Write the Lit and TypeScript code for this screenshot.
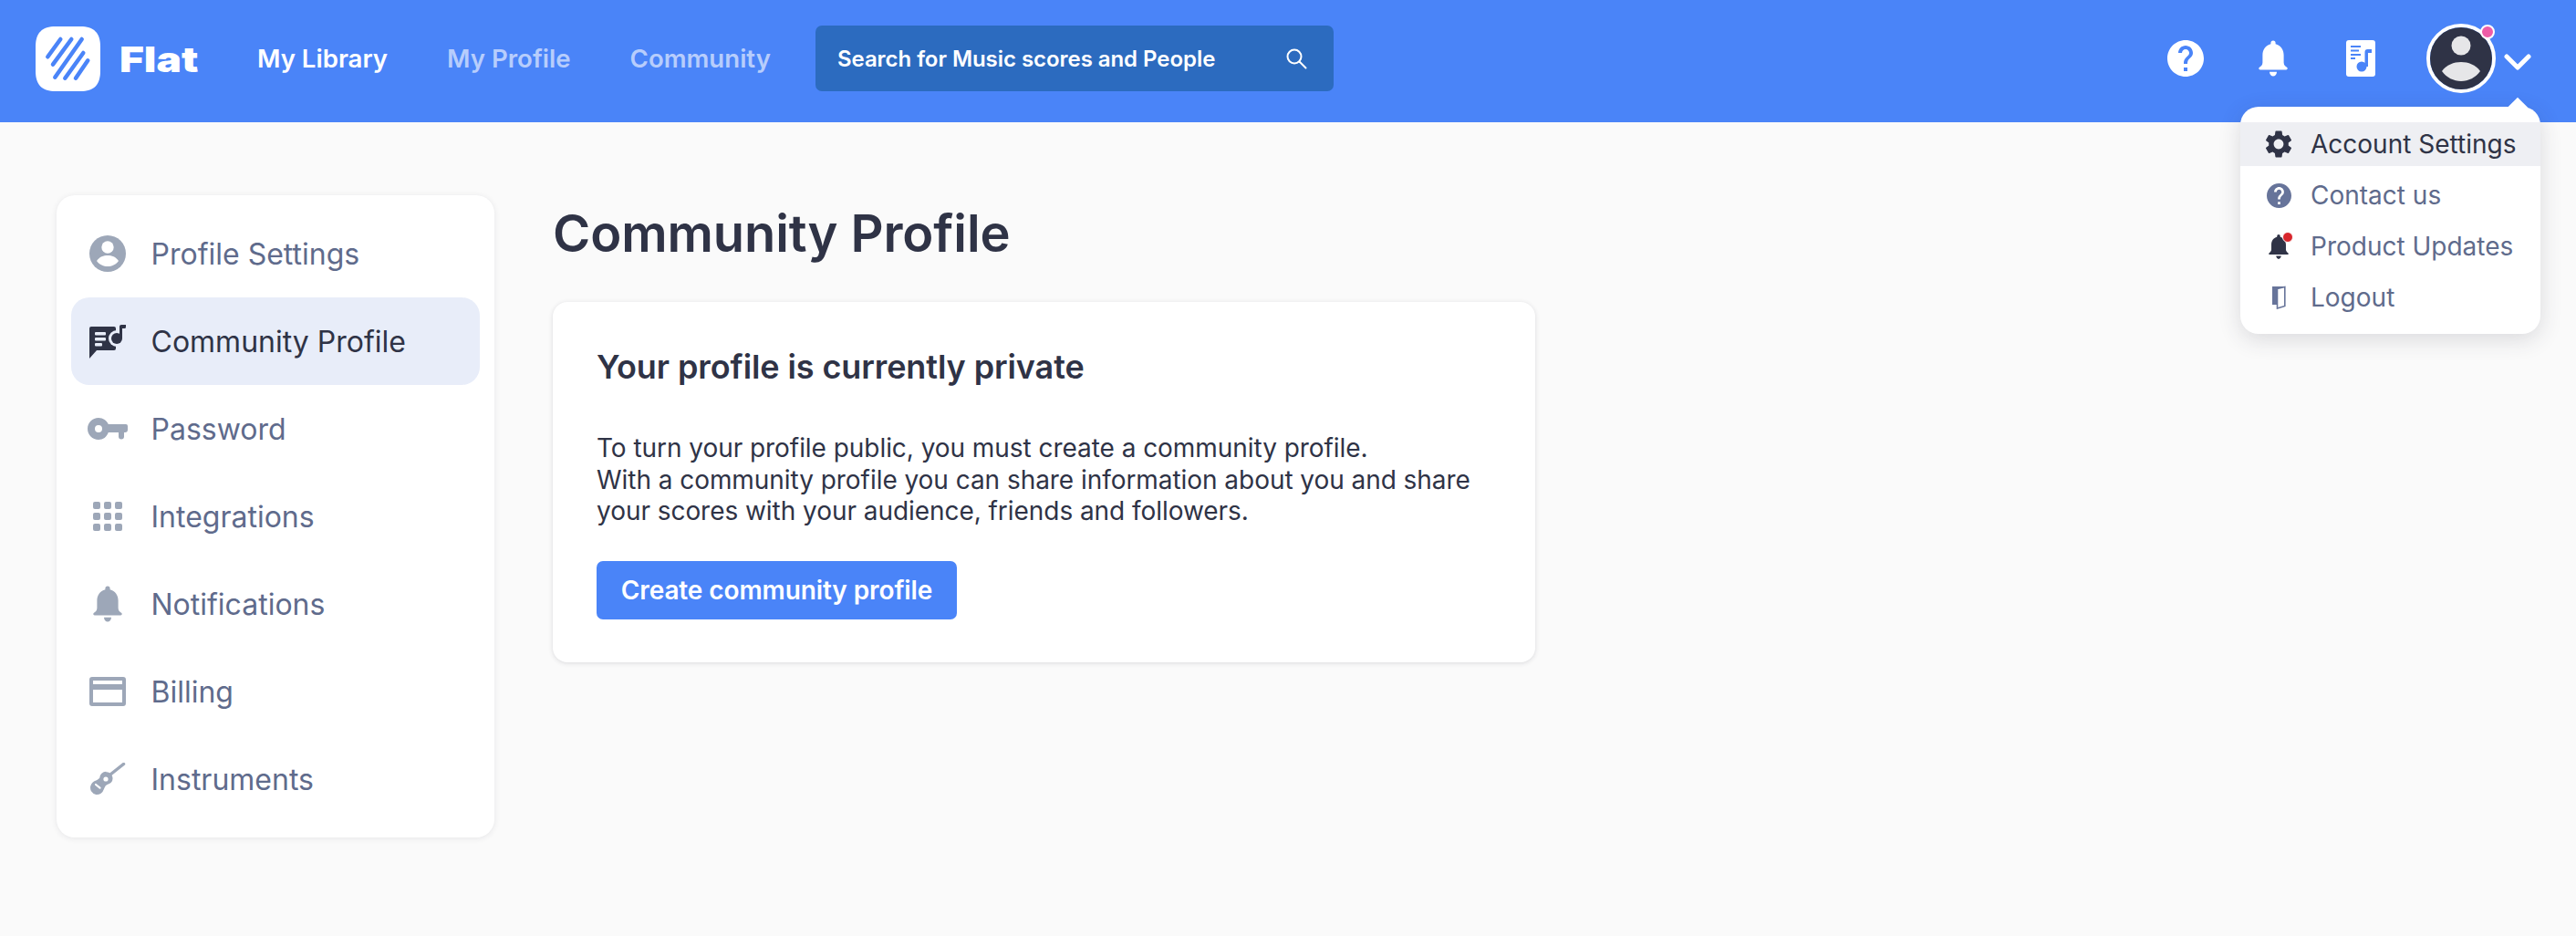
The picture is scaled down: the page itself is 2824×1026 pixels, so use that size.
import { css, html, LitElement, svg } from "lit";
import { customElement } from "lit/decorators.js";

const HELP = "M12 2C6.48 2 2 6.48 2 12s4.48 10 10 10 10-4.48 10-10S17.52 2 12 2zm1 17h-2v-2h2v2zm2.07-7.75l-.9.92C13.45 12.9 13 13.5 13 15h-2v-.5c0-1.1.45-2.1 1.17-2.83l1.24-1.26c.37-.36.59-.86.59-1.41 0-1.1-.9-2-2-2s-2 .9-2 2H8c0-2.21 1.79-4 4-4s4 1.79 4 4c0 .88-.36 1.68-.93 2.25z";
const GEAR = "M19.14 12.94c.04-.3.06-.61.06-.94 0-.32-.02-.64-.07-.94l2.03-1.58a.49.49 0 0 0 .12-.61l-1.92-3.32a.49.49 0 0 0-.59-.22l-2.39.96c-.5-.38-1.03-.7-1.62-.94l-.36-2.54a.48.48 0 0 0-.48-.41h-3.84c-.24 0-.43.17-.47.41l-.36 2.54c-.59.24-1.13.57-1.62.94l-2.39-.96c-.22-.08-.47 0-.59.22L2.74 8.87c-.12.21-.08.47.12.61l2.03 1.58c-.05.3-.09.63-.09.94s.02.64.07.94l-2.03 1.58a.49.49 0 0 0-.12.61l1.92 3.32c.12.22.37.29.59.22l2.39-.96c.5.38 1.03.7 1.62.94l.36 2.54c.05.24.24.41.48.41h3.84c.24 0 .44-.17.47-.41l.36-2.54c.59-.24 1.13-.56 1.62-.94l2.39.96c.22.08.47 0 .59-.22l1.92-3.32c.12-.22.07-.47-.12-.61l-2.01-1.58zM12 15.6c-1.98 0-3.6-1.62-3.6-3.6s1.62-3.6 3.6-3.6 3.6 1.62 3.6 3.6-1.62 3.6-3.6 3.6z";
const BELL = "M16 0a2.6 2.6 0 0 1 2.6 2.6v1.1C24.5 5.1 27.6 10 27.6 16v8c0 3 2 4.2 3.7 5.6.8.7.4 2.4-1 2.4H1.7c-1.4 0-1.8-1.7-1-2.4C2.400 28.200 4.400 27 4.400 24v-8C4.400 10 7.500 5.100 13.400 3.700V2.600A2.600 2.600 0 0 1 16 0zM12 34.200h8C20 37 18 39 16 39s-4-2-4-4.800z";

const helpIcon = (size: number) => html`<svg viewBox="2 2 20 20" width=${size} height=${size} fill="currentColor"><path d=${HELP}></path></svg>`;
const bellIcon = (w: number, h: number) => html`<svg viewBox="0 0 32 39" width=${w} height=${h} fill="currentColor"><path d=${BELL}></path></svg>`;

const navIcons = {
  profile: html`<svg viewBox="0 0 40 40" width="40" height="40"><circle cx="20" cy="20" r="20" fill="#9da7b8"></circle><circle cx="20" cy="13" r="6.700" fill="#fff"></circle><path d="M8 28c3-4.500 7.500-6 12-6s9 1.500 12 6c-3 4.300-7.500 6-12 6S11 32.300 8 28z" fill="#fff"></path></svg>`,
  community: html`<svg viewBox="0 0 40 37" width="40" height="37">
    <path d="M2 2h25a2 2 0 0 1 2 2v22a2 2 0 0 1-2 2H8l-8 9V4a2 2 0 0 1 2-2z" fill="#2f3346"></path>
    <circle cx="30" cy="15" r="9" fill="#e8edf9"></circle>
    <g fill="#e8edf9"><rect x="6" y="8" width="12" height="3.400" rx="1"></rect><rect x="6" y="14" width="12" height="3.400" rx="1"></rect><rect x="6" y="20" width="8" height="3.400" rx="1"></rect></g>
    <g fill="#2f3346"><circle cx="30" cy="15" r="6"></circle><path d="M33 15V2c0-1.200.8-2 2-2h5v2.500a1.500 1.500 0 0 1-1.500 1.500H36v11z"></path></g>
  </svg>`,
  key: html`<svg viewBox="0 0 44 24" width="44" height="24" fill="#9da7b8"><path d="M12 0c5 0 9 2.900 10.800 7H42a2 2 0 0 1 2 2v4a3 3 0 0 1-3 3h-1v4.500a3 3 0 0 1-6 0V16H22.800C21 21 17 24 12 24 5.400 24 0 18.600 0 12S5.400 0 12 0zm0 8a4 4 0 1 0 0 8 4 4 0 0 0 0-8z" fill-rule="evenodd"></path></svg>`,
  grid: html`<svg viewBox="0 0 32 32" width="32" height="32" fill="#9da7b8">${[0, 12, 24].map((y) => [0, 12, 24].map((x) => svg`<rect x=${x} y=${y} width="8" height="8" rx="2"></rect>`))}</svg>`,
  bell: html`<span class="grey">${bellIcon(32, 40)}</span>`,
  billing: html`<svg viewBox="0 0 40 32" width="40" height="32" fill="#9da7b8"><path fill-rule="evenodd" d="M3 0h34a3 3 0 0 1 3 3v26a3 3 0 0 1-3 3H3a3 3 0 0 1-3-3V3a3 3 0 0 1 3-3zm1 4v4h32V4zm0 10v14h32V14z"></path></svg>`,
  guitar: html`<svg viewBox="0 0 40 36" width="40" height="36">
    <path d="M23 13 37.500 1.500" stroke="#9da7b8" stroke-width="3.500" stroke-linecap="round" fill="none"></path>
    <path d="M18.300 10.300a7 7 0 0 1 5.500 11.500c-1.500 1.500-4.500 2-6 3.500-.8 1.200-1.500 2.500-2 4a8 8 0 0 1-8.500 5.700 7.600 7.600 0 0 1-6-9.500c1-3.500 3.500-5 6-6 1.500-.6 3-1.500 4-3a7 7 0 0 1 7-6.700z" fill="#9da7b8"></path>
    <circle cx="18" cy="18" r="2.600" fill="#fff"></circle>
    <path d="M7 24l4.500 3.700" stroke="#fff" stroke-width="2.200" stroke-linecap="round"></path>
  </svg>`,
};

const sideItems = [
  { label: "Profile Settings", icon: navIcons.profile },
  { label: "Community Profile", icon: navIcons.community, active: true },
  { label: "Password", icon: navIcons.key },
  { label: "Integrations", icon: navIcons.grid },
  { label: "Notifications", icon: navIcons.bell },
  { label: "Billing", icon: navIcons.billing },
  { label: "Instruments", icon: navIcons.guitar },
];

const menuItems = [
  {
    label: "Account Settings",
    active: true,
    icon: html`<svg viewBox="2 2 20 20" width="30" height="30" fill="#2f3346"><path d=${GEAR}></path></svg>`,
  },
  { label: "Contact us", icon: html`<span class="slate">${helpIcon(27)}</span>` },
  {
    label: "Product Updates",
    icon: html`<span class="updates">${bellIcon(22, 27)}<i></i></span>`,
  },
  {
    label: "Logout",
    icon: html`<svg viewBox="0 0 16 26" width="16" height="26"><path d="M1 1h13v3H7v17H1z" fill="#67749a"></path><path d="M6.500 3.500 14.800 1.500v21l-8.300 2.500z" fill="#fff" stroke="#67749a" stroke-width="1.600"></path><path d="M1 1h5.500v20H1z" fill="#67749a"></path></svg>`,
  },
];

@customElement("app-root")
class AppRootElement extends LitElement {
  render() {
    return html`
      <header class="topbar">
        <a class="brand">
          <svg class="logo" viewBox="0 0 71 71" width="71" height="71">
            <path d="M22 0h27c15 0 22 7 22 22v27c0 15-7 22-22 22H22C7 71 0 64 0 49V22C0 7 7 0 22 0z" fill="#fff"></path>
            <g stroke="#4a84f8" stroke-width="4.500" stroke-linecap="round">
              <path d="M27.300 14 13.300 33.300"></path>
              <path d="M39.300 14 19 41.700"></path>
              <path d="M50.700 14 21.300 55.700"></path>
              <path d="M52.300 29 32.300 56.700"></path>
              <path d="M57.300 37.300 44 56.700"></path>
            </g>
          </svg>
          <span class="brand-name">Flat</span>
        </a>
        <nav class="links">
          <a class="link current">My Library</a>
          <a class="link">My Profile</a>
          <a class="link">Community</a>
        </nav>
        <div class="search">
          <span>Search for Music scores and People</span>
          <svg viewBox="0 0 23 23" width="23" height="23" fill="none" stroke="#fff" stroke-width="2">
            <circle cx="9" cy="9" r="7.500"></circle>
            <path d="M14.500 14.500 21.500 21.500" stroke-linecap="round"></path>
          </svg>
        </div>
        <div class="tools">
          <span class="tool help">${helpIcon(40)}</span>
          <span class="tool bell">${bellIcon(32, 40)}</span>
          <span class="tool score">
            <svg viewBox="0 0 32 40" width="32" height="40">
              <rect width="32" height="40" rx="3" fill="#fff"></rect>
              <g fill="#4a84f8">
                <rect x="5" y="6" width="11" height="2"></rect>
                <rect x="5" y="10.500" width="9" height="2"></rect>
                <rect x="5" y="15" width="11" height="2"></rect>
                <rect x="5" y="19" width="5" height="2"></rect>
                <circle cx="17" cy="29" r="5.500"></circle>
                <path d="M20.500 29V13c0-2 1-3 3-3H28v4h-4v15z"></path>
              </g>
            </svg>
          </span>
          <span class="avatar">
            <svg viewBox="0 0 68 68" width="68" height="68">
              <circle cx="34" cy="34" r="34" fill="#2f3346"></circle>
              <circle cx="34" cy="20" r="10.500" fill="#e6e6e8"></circle>
              <path d="M13 48c5-7 13-10 21-10s16 3 21 10c-5 7-13 11-21 11s-16-4-21-11z" fill="#e6e6e8"></path>
            </svg>
            <i class="dot"></i>
          </span>
          <svg class="chevron" viewBox="0 0 30 18" width="30" height="18" fill="none" stroke="#fff" stroke-width="5" stroke-linecap="round" stroke-linejoin="round">
            <path d="M3 3 15 15 27 3"></path>
          </svg>
        </div>
      </header>

      <div class="page">
        <aside class="side">
          ${sideItems.map(
            (item) => html`
              <a class="side-item ${item.active ? "active" : ""}">
                <span class="side-icon">${item.icon}</span>
                <span>${item.label}</span>
              </a>
            `
          )}
        </aside>
        <main class="content">
          <h1>Community Profile</h1>
          <section class="card">
            <h2>Your profile is currently private</h2>
            <p>
              To turn your profile public, you must create a community profile.<br />
              With a community profile you can share information about you and share your scores with your audience, friends and followers.
            </p>
            <button>Create community profile</button>
          </section>
        </main>
      </div>

      <div class="menu">
        <i class="arrow"></i>
        ${menuItems.map(
          (item) => html`
            <a class="menu-item ${item.active ? "active" : ""}">
              <span class="menu-icon">${item.icon}</span>
              <span>${item.label}</span>
            </a>
          `
        )}
      </div>
    `;
  }

  static styles = css`
    :host {
      display: block;
      position: relative;
      min-height: 1026px;
      background: #fafafa;
      font-family: Inter, "Liberation Sans", sans-serif;
      color: #2f3346;
      overflow: hidden;
    }

    .topbar {
      display: flex;
      align-items: center;
      height: 134px;
      padding: 0 49px 6px 39px;
      background: #4a84f8;
      color: #fff;
      box-sizing: border-box;
    }

    .brand {
      display: flex;
      align-items: center;
      gap: 21px;
      width: 243px;
      flex: none;
    }

    .logo {
      display: block;
    }

    .brand-name {
      font-size: 39px;
      font-weight: 900;
      transform: scaleX(1.18);
      transform-origin: left center;
    }

    .links {
      display: flex;
      gap: 65px;
      font-size: 27.600px;
      font-weight: 600;
    }

    .link {
      color: #b7cdfc;
    }

    .link.current {
      color: #fff;
    }

    .search {
      display: flex;
      flex: none;
      align-items: center;
      justify-content: space-between;
      width: 568px;
      height: 72px;
      margin-left: 49px;
      padding: 0 29px 0 24px;
      box-sizing: border-box;
      border-radius: 7px;
      background: #2c6bbf;
      font-size: 24px;
      font-weight: 600;
      letter-spacing: -0.05px;
    }

    .search svg {
      display: block;
    }

    .tools {
      display: flex;
      align-items: center;
      margin-left: auto;
    }

    .tool {
      display: flex;
    }

    .help {
      margin-right: 60px;
    }

    .bell {
      margin-right: 64px;
    }

    .score {
      margin-right: 56px;
    }

    .avatar {
      position: relative;
      display: block;
      width: 68px;
      height: 68px;
      border: 4px solid #fff;
      border-radius: 50%;
    }

    .avatar svg {
      display: block;
    }

    .dot {
      position: absolute;
      top: -3px;
      right: -3px;
      width: 12px;
      height: 12px;
      border: 2.500px solid #fff;
      border-radius: 50%;
      background: #ee5ca6;
    }

    .chevron {
      display: block;
      margin: 8px 0 0 9px;
    }

    .page {
      display: flex;
      align-items: flex-start;
      gap: 64px;
      padding: 80px 0 0 62px;
    }

    .side {
      width: 480px;
      padding: 16px;
      box-sizing: border-box;
      border-radius: 20px;
      background: #fff;
      box-shadow: 0 1px 6px rgba(47, 51, 70, 0.1);
    }

    .side-item {
      display: flex;
      align-items: center;
      gap: 25px;
      height: 96px;
      padding-left: 17.500px;
      border-radius: 20px;
      font-size: 32px;
      color: #5f6b8c;
    }

    .side-item.active {
      background: #e8edf9;
      color: #2f3346;
    }

    .side-icon {
      display: flex;
      align-items: center;
      justify-content: center;
      width: 45px;
    }

    .grey {
      display: flex;
      color: #9da7b8;
    }

    .content {
      width: 1077px;
    }

    h1 {
      margin: 8px 0 0;
      font-size: 56px;
      line-height: 68px;
      font-weight: 600;
      letter-spacing: -0.1px;
    }

    .card {
      margin-top: 41px;
      padding: 49px 48px;
      height: 395px;
      box-sizing: border-box;
      border-radius: 16px;
      background: #fff;
      box-shadow: 0 1px 5px rgba(47, 51, 70, 0.16);
    }

    h2 {
      margin: 0;
      font-size: 36px;
      line-height: 44px;
      font-weight: 600;
      letter-spacing: -0.1px;
    }

    p {
      margin: 50px 0 0;
      font-size: 28px;
      line-height: 34.500px;
      letter-spacing: -0.05px;
    }

    button {
      display: block;
      width: 395px;
      height: 64px;
      margin-top: 37px;
      padding: 0;
      border: 0;
      border-radius: 7px;
      background: #4a84f8;
      color: #fff;
      font: 600 28px Inter, "Liberation Sans", sans-serif;
      letter-spacing: -0.1px;
    }

    .menu {
      position: absolute;
      top: 117px;
      left: 2456px;
      width: 329px;
      height: 249px;
      padding-top: 17px;
      box-sizing: border-box;
      border-radius: 20px;
      background: #fff;
      box-shadow: 0 6px 24px rgba(47, 51, 70, 0.16);
    }

    .arrow {
      position: absolute;
      top: -7px;
      left: 296px;
      width: 16px;
      height: 16px;
      background: #fff;
      transform: rotate(45deg);
    }

    .menu-item {
      position: relative;
      display: flex;
      align-items: center;
      gap: 20px;
      height: 56px;
      padding-left: 27px;
      font-size: 28px;
      color: #5f6b8c;
    }

    .menu-item:first-of-type {
      height: 48px;
      margin-bottom: 4px;
    }

    .menu-item.active {
      background: #eeeff3;
      color: #2f3346;
    }

    .menu-icon {
      display: flex;
      align-items: center;
      justify-content: center;
      width: 30px;
    }

    .slate {
      display: flex;
      color: #67749a;
    }

    .updates {
      position: relative;
      display: flex;
      color: #2f3346;
    }

    .updates i {
      position: absolute;
      top: -3px;
      right: -5px;
      width: 10px;
      height: 10px;
      border: 1px solid #fff;
      border-radius: 50%;
      background: #d8262c;
    }
  `;
}
